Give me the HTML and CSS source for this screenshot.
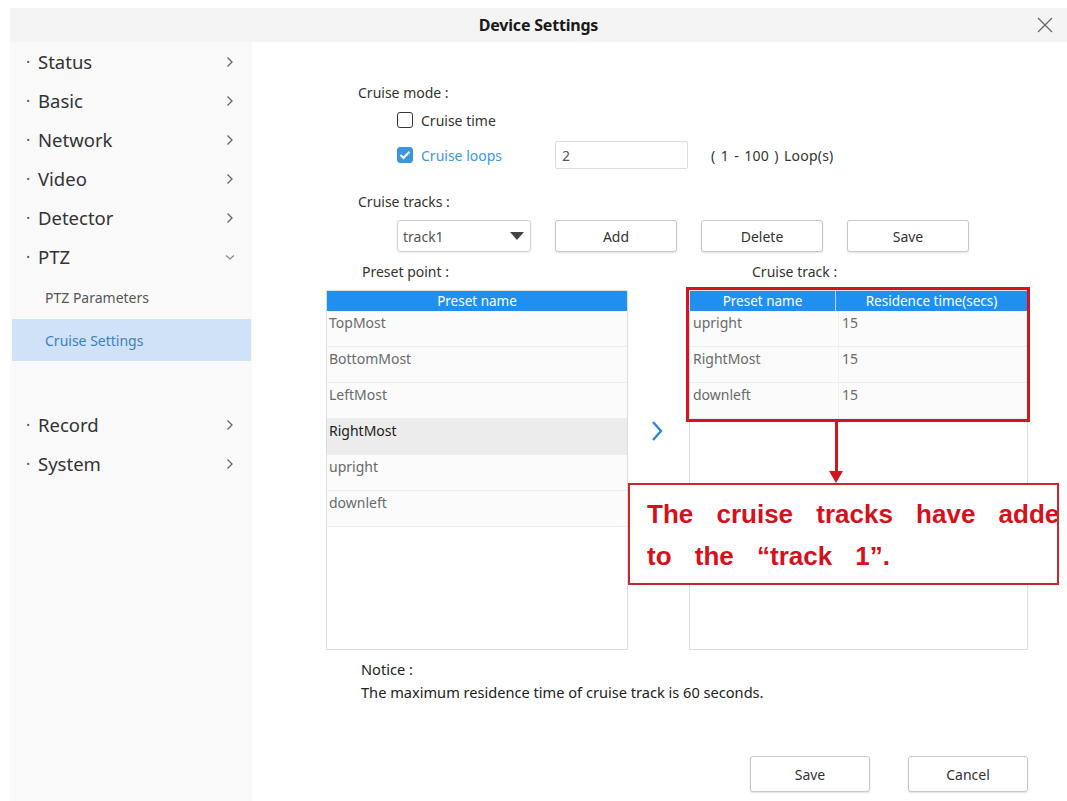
FILE: index.html
```html
<!DOCTYPE html>
<html lang="en">
<head>
<meta charset="utf-8">
<title>Device Settings</title>
<link rel="stylesheet" href="styles.css">
</head>
<body>
<div class="dialog">
  <header class="titlebar">
    <h1 class="title">Device Settings</h1>
    <span class="close" aria-label="Close">
      <svg width="16" height="16" viewBox="0 0 16 16"><path d="M1 1 L15 15 M15 1 L1 15" stroke="#666" stroke-width="1.3" fill="none"/></svg>
    </span>
  </header>
  <div class="main">
    <nav class="sidebar">
      <div class="nav-item"><span class="dot">·</span><span class="nav-label">Status</span><svg class="chev" width="8" height="12" viewBox="0 0 8 12"><path d="M1.5 1.5 L6 6 L1.5 10.5" stroke="#666" stroke-width="1.3" fill="none"/></svg></div>
      <div class="nav-item"><span class="dot">·</span><span class="nav-label">Basic</span><svg class="chev" width="8" height="12" viewBox="0 0 8 12"><path d="M1.5 1.5 L6 6 L1.5 10.5" stroke="#666" stroke-width="1.3" fill="none"/></svg></div>
      <div class="nav-item"><span class="dot">·</span><span class="nav-label">Network</span><svg class="chev" width="8" height="12" viewBox="0 0 8 12"><path d="M1.5 1.5 L6 6 L1.5 10.5" stroke="#666" stroke-width="1.3" fill="none"/></svg></div>
      <div class="nav-item"><span class="dot">·</span><span class="nav-label">Video</span><svg class="chev" width="8" height="12" viewBox="0 0 8 12"><path d="M1.5 1.5 L6 6 L1.5 10.5" stroke="#666" stroke-width="1.3" fill="none"/></svg></div>
      <div class="nav-item"><span class="dot">·</span><span class="nav-label">Detector</span><svg class="chev" width="8" height="12" viewBox="0 0 8 12"><path d="M1.5 1.5 L6 6 L1.5 10.5" stroke="#666" stroke-width="1.3" fill="none"/></svg></div>
      <div class="nav-item"><span class="dot">·</span><span class="nav-label">PTZ</span><svg class="chev down" width="12" height="8" viewBox="0 0 12 8"><path d="M2 2.5 L6 6 L10 2.5" stroke="#888" stroke-width="1.2" fill="none"/></svg></div>
      <div class="sub-item">PTZ Parameters</div>
      <div class="sub-item active">Cruise Settings</div>
      <div class="nav-item spaced"><span class="dot">·</span><span class="nav-label">Record</span><svg class="chev" width="8" height="12" viewBox="0 0 8 12"><path d="M1.5 1.5 L6 6 L1.5 10.5" stroke="#666" stroke-width="1.3" fill="none"/></svg></div>
      <div class="nav-item"><span class="dot">·</span><span class="nav-label">System</span><svg class="chev" width="8" height="12" viewBox="0 0 8 12"><path d="M1.5 1.5 L6 6 L1.5 10.5" stroke="#666" stroke-width="1.3" fill="none"/></svg></div>
    </nav>

    <section class="content">
      <div class="row label-row mode-label">Cruise mode :</div>
      <div class="row check-row time-row">
        <span class="checkbox"></span><span class="check-label">Cruise time</span>
      </div>
      <div class="row check-row loops-row">
        <span class="check-group">
          <span class="checkbox checked"><svg width="12" height="10" viewBox="0 0 12 10"><path d="M1.5 5 L4.5 8 L10.5 1.8" stroke="#fff" stroke-width="2" fill="none"/></svg></span><span class="check-label active">Cruise loops</span>
        </span>
        <span class="text-input">2</span>
        <span class="range">( 1 - 100 ) Loop(s)</span>
      </div>
      <div class="row label-row tracks-label">Cruise tracks :</div>
      <div class="row controls-row">
        <span class="select">track1<svg width="14" height="8" viewBox="0 0 14 8"><path d="M0 0 L14 0 L7 8 Z" fill="#444"/></svg></span>
        <span class="btn">Add</span>
        <span class="btn">Delete</span>
        <span class="btn">Save</span>
      </div>
      <div class="row panels-labels">
        <span class="preset-label">Preset point :</span>
        <span></span>
        <span class="track-label">Cruise track :</span>
      </div>
      <div class="panels">
        <div class="table left-table">
          <div class="thead"><span>Preset name</span></div>
          <div class="tr"><span>TopMost</span></div>
          <div class="tr"><span>BottomMost</span></div>
          <div class="tr"><span>LeftMost</span></div>
          <div class="tr selected"><span>RightMost</span></div>
          <div class="tr"><span>upright</span></div>
          <div class="tr"><span>downleft</span></div>
        </div>
        <div class="move">
          <svg width="12" height="22" viewBox="0 0 12 22"><path d="M2 2 L10 11 L2 20" stroke="#2f86d8" stroke-width="2.4" fill="none"/></svg>
        </div>
        <div class="table right-table">
          <div class="thead two"><span>Preset name</span><span>Residence time(secs)</span></div>
          <div class="tr two"><span>upright</span><span>15</span></div>
          <div class="tr two"><span>RightMost</span><span>15</span></div>
          <div class="tr two"><span>downleft</span><span>15</span></div>
        </div>

        <div class="highlight-box"></div>
        <div class="pointer"><span class="pointer-line"></span><span class="pointer-head"></span></div>
        <div class="callout">
          <span class="callout-line">The cruise tracks have added</span>
          <span class="callout-line">to the “track 1”.</span>
        </div>
      </div>
      <div class="notice">
        <div>Notice :</div>
        <div>The maximum residence time of cruise track is 60 seconds.</div>
      </div>
      <div class="row footer">
        <span class="btn big">Save</span>
        <span class="btn big">Cancel</span>
      </div>
    </section>
  </div>
</div>
</body>
</html>
```

FILE: styles.css
```css
* { box-sizing: border-box; }

html, body {
  margin: 0;
  padding: 0;
  background: #ffffff;
}

body {
  font-family: "Noto Sans", "Open Sans", sans-serif;
  color: #333;
  width: 1067px;
  height: 801px;
  overflow: hidden;
}

.dialog {
  padding: 8px 0 0 10px;
  height: 801px;
  display: flex;
  flex-direction: column;
}

.titlebar {
  height: 34px;
  background: #f4f4f4;
  display: flex;
  align-items: center;
  justify-content: center;
  position: relative;
}

.title {
  margin: 0;
  font-size: 16px;
  font-weight: 700;
  color: #1a1a1a;
  letter-spacing: -0.2px;
}

.close {
  position: absolute;
  right: 14px;
  top: 9px;
  width: 16px;
  height: 16px;
  display: block;
}
.close svg { display: block; }

.main {
  flex: 1;
  display: flex;
}

/* Sidebar */
.sidebar {
  width: 242px;
  background: #f9f9f9;
  display: flex;
  flex-direction: column;
}

.nav-item {
  height: 39px;
  display: flex;
  align-items: center;
  padding-left: 16px;
  padding-right: 18px;
  font-size: 18.5px;
  color: #333;
}
.nav-item.spaced { margin-top: 44px; }

.dot {
  width: 12px;
  font-size: 16px;
  color: #555;
}

.nav-label { flex: 1; }

.chev { display: block; }
.chev.down { margin-right: -2px; }

.sub-item {
  height: 43px;
  display: flex;
  align-items: center;
  padding-left: 35px;
  font-size: 14px;
  color: #555;
}
.sub-item.active {
  height: 42px;
  margin: 0 1px 0 2px;
  padding-left: 33px;
  background: #cfe2f7;
  color: #3b80c4;
}

/* Content */
.content {
  flex: 1;
  padding: 40px 0 0 74px;
  display: flex;
  flex-direction: column;
  font-size: 14px;
  color: #333;
}

.row {
  display: flex;
  align-items: center;
}

.label-row { height: 20px; }
.mode-label { margin-left: 32px; }
.tracks-label { margin-left: 32px; margin-top: 22px; }

.check-row { margin-left: 71px; }
.time-row { height: 20px; margin-top: 8px; }
.loops-row { height: 28px; margin-top: 11px; }

.check-group {
  width: 158px;
  display: flex;
  align-items: center;
}

.checkbox {
  width: 16px;
  height: 16px;
  border: 1.5px solid #333;
  border-radius: 3px;
  display: inline-flex;
  align-items: center;
  justify-content: center;
  background: #fff;
}
.checkbox.checked {
  background: #3a97dd;
  border-color: #3a97dd;
}

.check-label { margin-left: 8px; }
.check-label.active { color: #3a97dd; }

.text-input {
  width: 133px;
  height: 28px;
  border: 1px solid #dcdcdc;
  border-radius: 2px;
  padding-left: 6px;
  display: flex;
  align-items: center;
  color: #555;
}

.range {
  margin-left: 23px;
  font-size: 14px;
  word-spacing: 1.5px;
  letter-spacing: 0.2px;
}

.controls-row {
  height: 32px;
  margin: 9px 0 0 71px;
  gap: 24px;
}

.select {
  width: 134px;
  height: 32px;
  border: 1px solid #d0d0d0;
  border-radius: 3px;
  display: flex;
  align-items: center;
  justify-content: space-between;
  padding: 0 6px 0 5px;
  color: #555;
  box-shadow: 0 1px 2px rgba(0,0,0,0.08);
}

.btn {
  width: 122px;
  height: 32px;
  border: 1px solid #c8c8c8;
  border-radius: 3px;
  background: #fff;
  display: flex;
  align-items: center;
  justify-content: center;
  color: #333;
  box-shadow: 0 1px 2px rgba(0,0,0,0.12);
}

.panels-labels {
  height: 20px;
  margin-top: 9px;
  display: grid;
  grid-template-columns: 302px 61px 339px;
}
.preset-label { margin-left: 36px; }
.track-label { margin-left: 63px; }

.panels {
  position: relative;
  height: 360px;
  margin-top: 9px;
  display: grid;
  grid-template-columns: 302px 61px 339px;
}

.table {
  border: 1px solid #dedede;
  background: #fff;
  color: #6a6a6a;
  font-size: 14px;
}

.thead {
  height: 20px;
  background: #1f8ff0;
  color: #fff;
  display: flex;
  align-items: center;
  justify-content: center;
  font-size: 13.5px;
}
.thead.two {
  display: grid;
  grid-template-columns: 145px 1fr;
}
.thead.two span {
  text-align: center;
  line-height: 20px;
}
.thead.two span + span { border-left: 1px solid #b9dcfa; }

.tr {
  height: 36px;
  line-height: 24px;
  padding-left: 2px;
  border-bottom: 1px solid #eeeeee;
  background: #fbfbfb;
}
.tr.selected {
  background: #ececec;
  color: #222;
}
.tr.two {
  display: grid;
  grid-template-columns: 145px 1fr;
  padding-left: 3px;
}
.tr.two span + span {
  padding-left: 3px;
  border-left: 1px solid #f0f0f0;
}

.move {
  display: flex;
  justify-content: center;
  padding-top: 130px;
}
.move svg { display: block; margin-left: -3px; }

/* Annotation overlays */
.highlight-box {
  position: absolute;
  left: 360px;
  top: -3px;
  width: 344px;
  height: 135px;
  border: 3px solid #d2161f;
}

.pointer {
  position: absolute;
  left: 503px;
  top: 132px;
  width: 14px;
  height: 61px;
  display: flex;
  flex-direction: column;
  align-items: center;
}
.pointer-line {
  width: 3px;
  height: 49px;
  background: #d2161f;
}
.pointer-head {
  width: 0;
  height: 0;
  border-left: 7px solid transparent;
  border-right: 7px solid transparent;
  border-top: 12px solid #d2161f;
}

.callout {
  position: absolute;
  left: 302px;
  top: 193px;
  width: 431px;
  height: 102px;
  border: 2px solid #c9262d;
  background: #fff;
  padding: 8px 0 0 17px;
  overflow: hidden;
  font-family: "Liberation Sans", Arial, sans-serif;
  font-weight: 700;
  font-size: 26px;
  line-height: 42px;
  color: #d4111c;
  word-spacing: 16px;
  white-space: nowrap;
}
.callout-line { display: block; }

.notice {
  margin: 8px 0 0 35px;
  font-size: 14.6px;
  line-height: 23px;
  color: #222;
}

.footer {
  margin: 52px 0 0 424px;
  gap: 38px;
}
.btn.big {
  width: 120px;
  height: 36px;
}
```
